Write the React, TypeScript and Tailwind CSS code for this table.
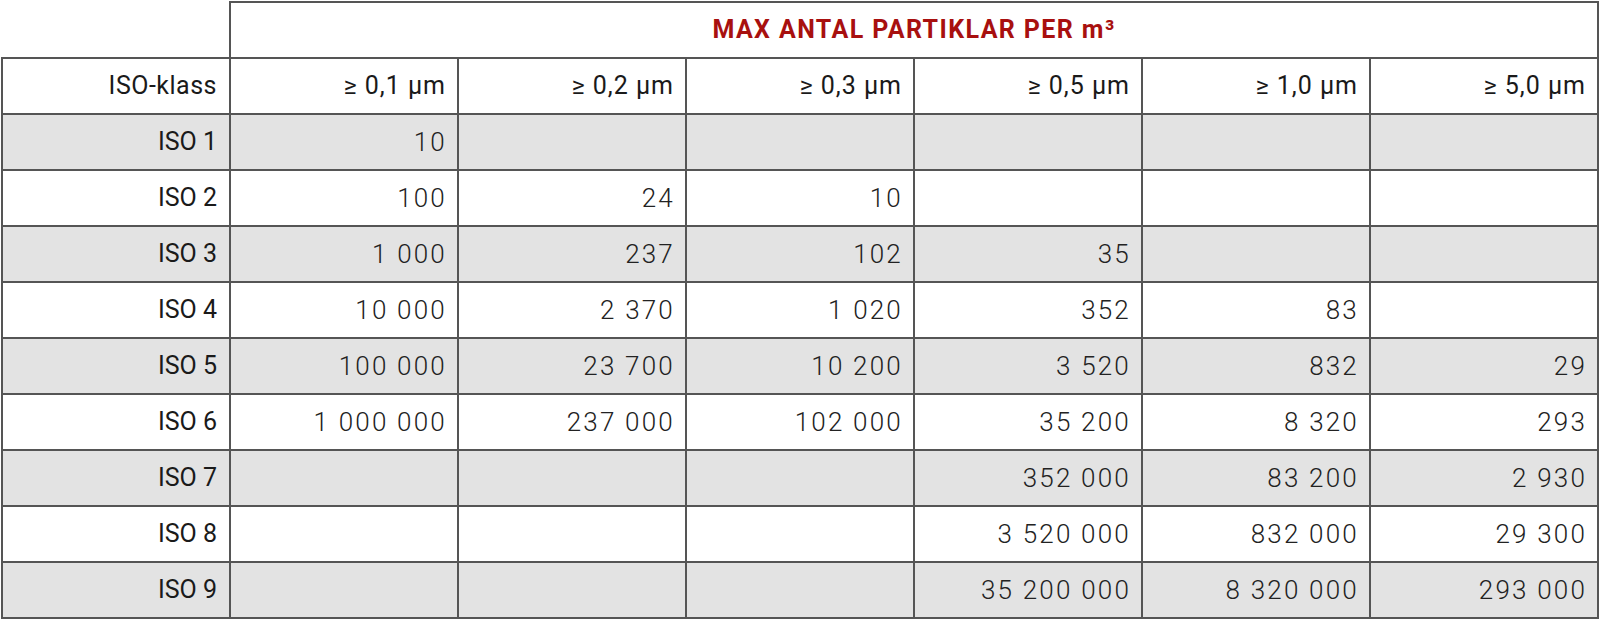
const sizes = ['≥ 0,1 µm', '≥ 0,2 µm', '≥ 0,3 µm', '≥ 0,5 µm', '≥ 1,0 µm', '≥ 5,0 µm'];

const rows: { label: string; values: string[] }[] = [
  { label: 'ISO 1', values: ['10', '', '', '', '', ''] },
  { label: 'ISO 2', values: ['100', '24', '10', '', '', ''] },
  { label: 'ISO 3', values: ['1 000', '237', '102', '35', '', ''] },
  { label: 'ISO 4', values: ['10 000', '2 370', '1 020', '352', '83', ''] },
  { label: 'ISO 5', values: ['100 000', '23 700', '10 200', '3 520', '832', '29'] },
  { label: 'ISO 6', values: ['1 000 000', '237 000', '102 000', '35 200', '8 320', '293'] },
  { label: 'ISO 7', values: ['', '', '', '352 000', '83 200', '2 930'] },
  { label: 'ISO 8', values: ['', '', '', '3 520 000', '832 000', '29 300'] },
  { label: 'ISO 9', values: ['', '', '', '35 200 000', '8 320 000', '293 000'] },
];

const cell = 'border-2 border-[#555] h-[56px] text-right align-middle';

export default function App() {
  return (
    <div className="w-[1600px] h-[619px] bg-white pl-px pt-px font-['Roboto',sans-serif] text-[#1a1a1a]">
      <table className="table-fixed border-collapse w-[1598px]">
        <colgroup>
          {Array.from({ length: 7 }).map((_, i) => (
            <col key={i} className="w-[228px]" />
          ))}
        </colgroup>
        <tbody>
          <tr>
            <td className="h-[56px] border-r-2 border-b-2 border-[#555]" />
            <td
              colSpan={6}
              className="border-2 border-[#555] h-[56px] text-center align-middle text-[25px] font-bold text-[#a8100f] tracking-[1.4px]"
            >
              MAX ANTAL PARTIKLAR PER m³
            </td>
          </tr>
          <tr>
            <td className={`${cell} px-[12px] text-[25px] tracking-[0.5px]`}>ISO-klass</td>
            {sizes.map((s) => (
              <td key={s} className={`${cell} pl-[12px] pr-[11px] text-[25px] tracking-[1px]`}>
                {s}
              </td>
            ))}
          </tr>
          {rows.map((r, i) => (
            <tr key={r.label} className={i % 2 === 0 ? 'bg-[#e3e3e3]' : 'bg-white'}>
              <td className={`${cell} px-[12px] text-[25px]`}>{r.label}</td>
              {r.values.map((v, j) => (
                <td
                  key={j}
                  className={`${cell} pl-[10px] pr-[10px] text-[26px] font-light tracking-[2.2px] text-[#222]`}
                >
                  {v}
                </td>
              ))}
            </tr>
          ))}
        </tbody>
      </table>
    </div>
  );
}
